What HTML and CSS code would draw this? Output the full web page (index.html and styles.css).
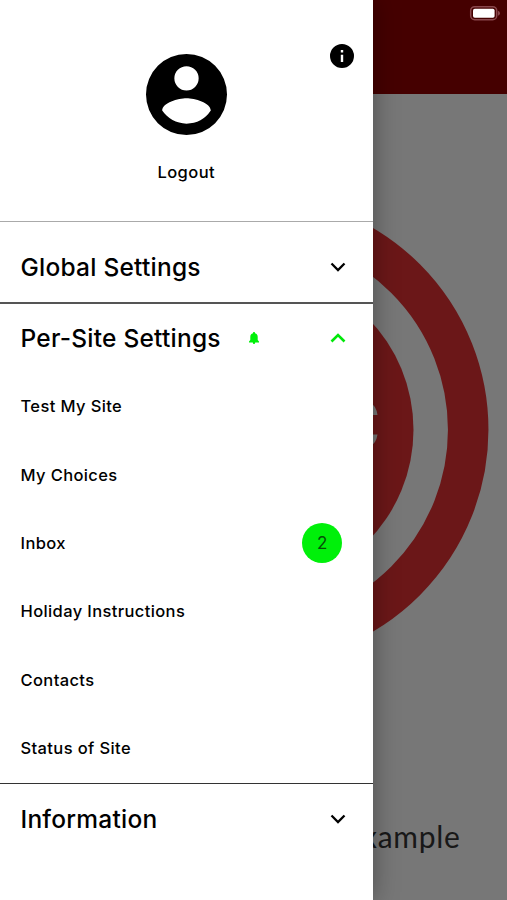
FILE: index.html
```html
<!DOCTYPE html>
<html lang="en">
<head>
<meta charset="utf-8">
<title>Settings</title>
<link rel="stylesheet" href="styles.css">
</head>
<body>
<div class="screen">
  <main class="page">
    <header class="topbar">
      <svg class="battery" viewBox="0 0 32 16"><rect x="1.700" y="1.700" width="26" height="13" rx="4" fill="none" stroke="#89474c" stroke-width="1.500"/><rect x="4" y="3.700" width="21.600" height="9" rx="1.800" fill="#fff"/><path d="M29 5.700Q31 6.500 31 8.200T29 10.700Z" fill="#89474c"/></svg>
    </header>
    <svg class="target" viewBox="0 0 507 500"><circle cx="254.500" cy="249.700" r="213.700" fill="none" stroke="#6b1718" stroke-width="40.500"/><circle cx="254.500" cy="249.700" r="159" fill="#6b1718"/><path d="M370 223Q376 225 377.500 235H370ZM370 254.500H377.500Q376 264 370 266Z" fill="#777"/></svg>
    <p class="caption">example</p>
  </main>
  <aside class="drawer">
    <section class="profile">
      <svg class="info" viewBox="2 2 20 20"><path d="M12 2a10 10 0 1 0 0 20 10 10 0 0 0 0-20zm1 15h-2v-6h2v6zm0-8h-2V7h2v2z"/></svg>
      <svg class="avatar" viewBox="2 2 20 20"><path d="M12 2a10 10 0 1 0 0 20 10 10 0 0 0 0-20zm0 3a3 3 0 1 1 0 6 3 3 0 0 1 0-6zm0 14.200c-2.500 0-4.710-1.280-6-3.220.03-1.990 4-3.080 6-3.080 1.990 0 5.970 1.090 6 3.080A7.200 7.200 0 0 1 12 19.200z"/></svg>
      <a class="logout">Logout</a>
    </section>
    <section class="group global">
      <h2>Global Settings</h2>
      <svg class="chevron" viewBox="0 0 16 10"><path d="M1.500 1.500 8 8l6.500-6.500"/></svg>
    </section>
    <section class="group site">
      <h2>Per-Site Settings</h2>
      <svg class="bell" viewBox="0 0 10 12"><path d="M5 0C4.400 0 4 .4 4 1v.3C2.200 1.700 1.300 3 1.300 4.800V8L0 9.500v.9h10v-.9L8.700 8V4.800C8.700 3 7.800 1.700 6 1.300V1c0-.6-.4-1-1-1zM3.800 10.400a1.200 1.500 0 0 0 2.400 0z"/></svg>
      <svg class="chevron open" viewBox="0 0 16 10"><path d="M1.500 8.500 8 2l6.500 6.500"/></svg>
    </section>
    <ul class="items">
      <li><span>Test My Site</span></li>
      <li><span>My Choices</span></li>
      <li><span>Inbox</span><b class="badge">2</b></li>
      <li><span>Holiday Instructions</span></li>
      <li><span>Contacts</span></li>
      <li><span>Status of Site</span></li>
    </ul>
    <section class="group information">
      <h2>Information</h2>
      <svg class="chevron" viewBox="0 0 16 10"><path d="M1.500 1.500 8 8l6.500-6.500"/></svg>
    </section>
  </aside>
</div>
</body>
</html>
```
FILE: styles.css
```css
* { box-sizing: border-box; }
body { margin: 0; font-family: Inter, sans-serif; color: #000; }
.screen { position: relative; width: 507px; height: 900px; overflow: hidden; background: #777; }
.page { height: 900px; }
.topbar { height: 94px; background: #450000; display: flex; justify-content: flex-end; padding: 5px 6px 0 0; }
.battery { width: 32px; height: 16px; }
.target { display: block; width: 507px; height: 500px; margin-top: 86px; }
.caption { margin: 136px 46.500px 0 0; text-align: right; font: 30px/40px Lato, sans-serif; letter-spacing: .7px; color: #181818; }
.drawer { position: absolute; left: 0; top: 0; width: 372.600px; height: 900px; background: #fff; box-shadow: 0 0 24px rgba(0,0,0,.35); }
.profile { position: relative; height: 222px; border-bottom: 1px solid #aaa; display: flex; flex-direction: column; align-items: center; padding-top: 54px; }
.avatar { width: 81px; height: 81px; }
.info { position: absolute; left: 330px; top: 44px; width: 24px; height: 24px; }
.logout { margin-top: 26px; font-size: 16.500px; line-height: 23px; font-weight: 450; letter-spacing: .45px; }
.group { display: flex; align-items: center; padding: 0 26.500px 0 20.500px; }
.group h2 { flex: none; margin: 0; font-size: 24.500px; line-height: 32px; font-weight: 450; letter-spacing: .23px; }
.global { height: 82px; padding-top: 10px; border-bottom: 2px solid #555; }
.site { height: 68px; }
.chevron { width: 16px; height: 10px; margin-left: auto; fill: none; stroke: #000; stroke-width: 2.300; }
.open { stroke: #00e80a; stroke-width: 2.600; }
.bell { width: 10px; height: 12px; margin-left: 28px; fill: #00f00a; }
.items { margin: 0; padding: 0; list-style: none; height: 412px; border-bottom: 1.500px solid #333; }
.items li { height: 68.400px; display: flex; align-items: center; justify-content: space-between; padding: 0 30.500px 0 20.500px; font-size: 16.500px; font-weight: 450; letter-spacing: .38px; }
.badge { width: 40px; height: 40px; border-radius: 50%; background: #00f00a; color: #064f08; display: flex; align-items: center; justify-content: center; font-size: 17px; font-weight: 400; letter-spacing: 0; }
.information { height: 70px; }
```
